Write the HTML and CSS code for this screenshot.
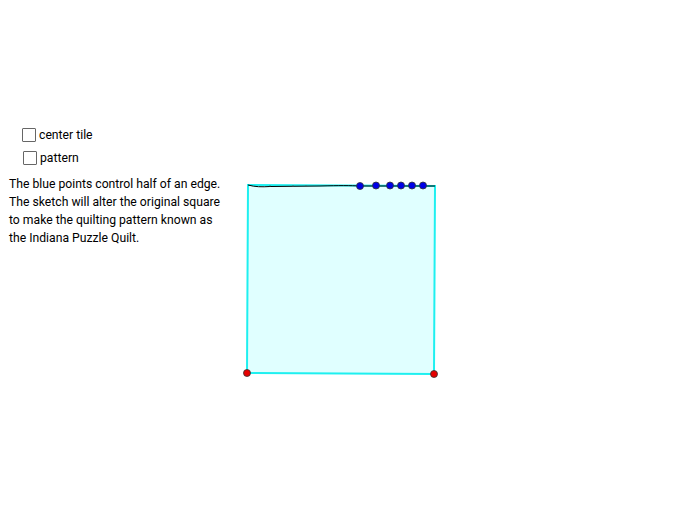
FILE: index.html
```html
<!DOCTYPE html>
<html>
<head>
<meta charset="utf-8">
<link rel="stylesheet" href="styles.css">
</head>
<body>
<div class="app">
  <div class="panel">
    <label class="check"><span class="box"></span><span class="lbl">center tile</span></label>
    <label class="check second"><span class="box"></span><span class="lbl">pattern</span></label>
    <p class="desc">The blue points control half of an edge.<br>The sketch will alter the original square<br>to make the quilting pattern known as<br>the Indiana Puzzle Quilt.</p>
  </div>
  <svg class="canvas" width="693" height="524" viewBox="0 0 693 524">
    <polygon points="248,185 435,186 434,374 247,373" fill="#e0ffff" stroke="#1ef0f0" stroke-width="2"/>
    <path d="M248,185 C255,187 262,187 270,186.5 L320,186 C340,185.5 350,185.5 360,186 L435,186" fill="none" stroke="#000" stroke-width="1"/>
    <g stroke="#555" stroke-width="0.6">
      <line x1="270" y1="185" x2="270" y2="187"/>
      <line x1="293" y1="185" x2="293" y2="187"/>
      <line x1="306" y1="185" x2="306" y2="187"/>
    </g>
    <g fill="#0000e6" stroke="#333" stroke-width="0.8">
      <circle cx="360" cy="186" r="3.5"/>
      <circle cx="376" cy="185.5" r="3.5"/>
      <circle cx="390" cy="185.5" r="3.5"/>
      <circle cx="401" cy="185.5" r="3.5"/>
      <circle cx="412" cy="185.5" r="3.5"/>
      <circle cx="423" cy="185.5" r="3.5"/>
    </g>
    <g fill="#e60000" stroke="#333" stroke-width="0.8">
      <circle cx="247" cy="373" r="3.5"/>
      <circle cx="434" cy="374" r="3.5"/>
    </g>
  </svg>
</div>
</body>
</html>
```
FILE: styles.css
```css
html, body {
  margin: 0;
  padding: 0;
  background: #fff;
}
.app {
  position: relative;
  width: 693px;
  height: 524px;
  overflow: hidden;
  font-family: Roboto, "Liberation Sans", sans-serif;
  color: #000;
}
.panel {
  position: relative;
  z-index: 1;
  padding-top: 127px;
  padding-left: 9px;
}
.check {
  display: flex;
  align-items: center;
  gap: 3px;
  margin-left: 13px;
  height: 15px;
  font-size: 12.2px;
}
.check.second {
  margin-top: 8px;
  margin-left: 14px;
}
.box {
  width: 12px;
  height: 12px;
  border: 1px solid #666;
  border-radius: 1px;
  background: #fff;
}
.desc {
  margin: 10px 0 0 0;
  font-size: 12.2px;
  line-height: 18px;
}
.canvas {
  position: absolute;
  left: 0;
  top: 0;
}
```
